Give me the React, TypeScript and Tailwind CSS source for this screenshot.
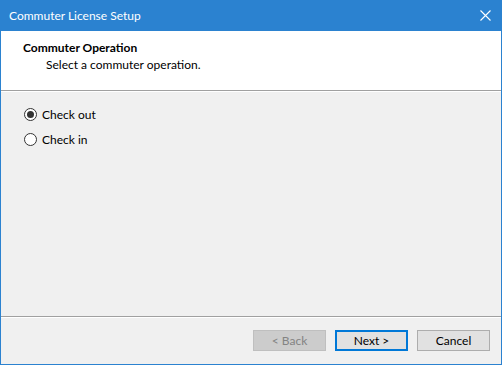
import { useState } from "react";

const FONT = { fontFamily: 'Lato, "Segoe UI", sans-serif' };

function Radio({ checked, label, onClick }: { checked: boolean; label: string; onClick: () => void }) {
  return (
    <button onClick={onClick} className="flex items-center h-[25px] gap-[5px] text-[12px] text-black">
      <span className="flex items-center justify-center w-[13px] h-[13px] rounded-full border border-[#333333] bg-white">
        {checked && <span className="w-[7px] h-[7px] rounded-full bg-[#333333]" />}
      </span>
      <span>{label}</span>
    </button>
  );
}

export default function App() {
  const [op, setOp] = useState("out");

  return (
    <div style={FONT} className="w-[502px] h-[365px] flex flex-col bg-[#f0f0f0] border-x border-b border-[#2b82d0] overflow-hidden">
      {/* title bar */}
      <div className="h-[31px] shrink-0 -mx-px bg-[#2b82d0] flex items-center justify-between pl-[9px] pr-[11px] text-white text-[12px]">
        <span>Commuter License Setup</span>
        <svg width="11" height="11" viewBox="0 0 11 11" className="shrink-0">
          <path d="M0.5 0.5 L10.5 10.5 M10.5 0.5 L0.5 10.5" stroke="white" strokeWidth="1.1" />
        </svg>
      </div>

      {/* header */}
      <div className="h-[59px] shrink-0 bg-white pl-[22px] pt-[8px] text-[12px] text-black leading-[17px]">
        <div className="font-bold">Commuter Operation</div>
        <div className="pl-[23px]">Select a commuter operation.</div>
      </div>
      <div className="h-px shrink-0 bg-[#a0a0a0]" />
      <div className="h-px shrink-0 bg-white" />

      {/* body */}
      <div className="flex-1 flex flex-col pl-[23px] pt-[10px]">
        <Radio checked={op === "out"} label="Check out" onClick={() => setOp("out")} />
        <Radio checked={op === "in"} label="Check in" onClick={() => setOp("in")} />
      </div>

      {/* footer */}
      <div className="h-px shrink-0 bg-[#a0a0a0]" />
      <div className="h-px shrink-0 bg-white" />
      <div className="h-[46px] shrink-0 flex items-start justify-end gap-[9px] pt-[12px] pr-[11px] text-[12px]">
        <button disabled className="w-[73px] h-[21px] bg-[#cccccc] border border-[#bfbfbf] text-[#838383]">
          &lt; Back
        </button>
        <button className="w-[73px] h-[21px] bg-[#e1e1e1] border-2 border-[#0078d7] text-black">
          Next &gt;
        </button>
        <button className="w-[73px] h-[21px] bg-[#e1e1e1] border border-[#adadad] text-black">
          Cancel
        </button>
      </div>
    </div>
  );
}
